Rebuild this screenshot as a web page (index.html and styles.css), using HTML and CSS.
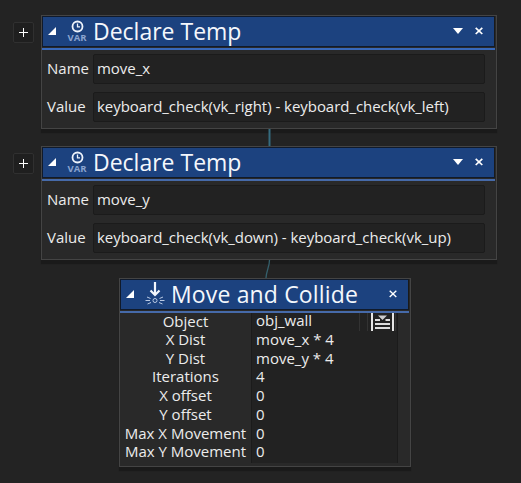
FILE: index.html
```html
<!DOCTYPE html>
<html lang="en">
<head>
  <meta charset="UTF-8" />
  <meta name="viewport" content="width=device-width, initial-scale=1.0"/>
  <title>Move and Collide</title>
  <link rel="stylesheet" href="styles.css">
</head>
<body>
  <main class="workspace">
    <div class="step">
      <button class="add-button" aria-label="Add">
        <svg width="9" height="9" viewBox="0 0 9 9"><path d="M0 4.5h9M4.5 0v9" stroke="#fff"/></svg>
      </button>
      <section class="node">
        <header class="node-header">
          <svg class="collapse" width="8" height="8" viewBox="0 0 8 8"><path d="M8 0v8H0z" fill="#fff"/></svg>
          <div class="node-icon">
            <svg width="13" height="13" viewBox="0 0 13 13" fill="none" stroke="#eef3fb"><circle cx="6.5" cy="6.5" r="5" stroke-width="1.8"/><path d="M6.5 3.5v3.3H9" stroke-width="1.3"/></svg>
            <span>VAR</span>
          </div>
          <h2>Declare Temp</h2>
          <div class="controls">
            <svg width="10" height="6" viewBox="0 0 10 6"><path d="M0 0h10L5 6z" fill="#fff"/></svg>
            <svg width="8" height="8" viewBox="0 0 8 8"><path d="M.7 .8l6.6 6.2M7.3 .8L.7 7" stroke="#fff" stroke-width="1.7"/></svg>
          </div>
        </header>
        <div class="fields">
          <label>Name</label><div class="field">move_x</div>
          <label>Value</label><div class="field">keyboard_check(vk_right) - keyboard_check(vk_left)</div>
        </div>
      </section>
    </div>

    <svg class="link" width="12" height="17" viewBox="0 0 12 17"><path d="M6.5 0v17" stroke="#356b7e" stroke-width="2"/></svg>

    <div class="step">
      <button class="add-button" aria-label="Add">
        <svg width="9" height="9" viewBox="0 0 9 9"><path d="M0 4.5h9M4.5 0v9" stroke="#fff"/></svg>
      </button>
      <section class="node soft">
        <header class="node-header">
          <svg class="collapse" width="8" height="8" viewBox="0 0 8 8"><path d="M8 0v8H0z" fill="#fff"/></svg>
          <div class="node-icon">
            <svg width="13" height="13" viewBox="0 0 13 13" fill="none" stroke="#eef3fb"><circle cx="6.5" cy="6.5" r="5" stroke-width="1.8"/><path d="M6.5 3.5v3.3H9" stroke-width="1.3"/></svg>
            <span>VAR</span>
          </div>
          <h2>Declare Temp</h2>
          <div class="controls">
            <svg width="10" height="6" viewBox="0 0 10 6"><path d="M0 0h10L5 6z" fill="#fff"/></svg>
            <svg width="8" height="8" viewBox="0 0 8 8"><path d="M.7 .8l6.6 6.2M7.3 .8L.7 7" stroke="#fff" stroke-width="1.7"/></svg>
          </div>
        </header>
        <div class="fields">
          <label>Name</label><div class="field">move_y</div>
          <label>Value</label><div class="field">keyboard_check(vk_down) - keyboard_check(vk_up)</div>
        </div>
      </section>
    </div>

    <svg class="link" width="12" height="18" viewBox="0 0 12 18"><path d="M6.5 0C6.5 7 3.5 10 3 18" fill="none" stroke="#35606c" stroke-width="1.3"/></svg>

    <section class="node soft collide">
      <header class="node-header">
        <svg class="collapse" width="8" height="8" viewBox="0 0 8 8"><path d="M8 0v8H0z" fill="#fff"/></svg>
        <svg class="move-icon" width="20" height="24" viewBox="0 0 20 24" fill="none">
          <path d="M10 0v13M5.5 8.5L10 13l4.500-4.500" stroke="#f2f6fc" stroke-width="2.2"/>
          <circle cx="10" cy="18.5" r="2" stroke="#b9c9e4"/>
          <path d="M.5 18.500H5M15 18.500h4.500M2 15l3.500 1.500M18 15l-3.500 1.500M2.500 22L6 20.500M17.500 22L14 20.500" stroke="#b9c9e4"/>
        </svg>
        <h2>Move and Collide</h2>
        <div class="controls">
          <svg width="8" height="8" viewBox="0 0 8 8"><path d="M.7 .8l6.6 6.2M7.3 .8L.7 7" stroke="#fff" stroke-width="1.4"/></svg>
        </div>
      </header>
      <div class="params">
        <div class="names">
          <div>Object</div>
          <div>X Dist</div>
          <div>Y Dist</div>
          <div>Iterations</div>
          <div>X offset</div>
          <div>Y offset</div>
          <div>Max X Movement</div>
          <div>Max Y Movement</div>
        </div>
        <div class="values">
          <div class="object-value">
            <span>obj_wall</span>
            <svg width="38" height="18" viewBox="0 0 38 18">
              <path d="M.5 0v18M8.5 0v18M36.5 0v18" stroke="#333"/>
              <path d="M13 0v18M34 0v18" stroke="#e4e4e4" stroke-width="2"/>
              <path d="M19 2.500h9L23.500 7z" fill="#ccc"/>
              <path d="M16 7h5M26.500 7H31M16 11h15M16 15h15" stroke="#ddd" stroke-width="2"/>
            </svg>
          </div>
          <div>move_x * 4</div>
          <div>move_y * 4</div>
          <div>4</div>
          <div>0</div>
          <div>0</div>
          <div>0</div>
          <div>0</div>
        </div>
      </div>
    </section>
  </main>
</body>
</html>
```
FILE: styles.css
```css
* {
  box-sizing: border-box;
}
body {
  margin: 0;
  background-color: #232323;
  color: #ececec;
  font-family: 'Open Sans', 'Noto Sans', sans-serif;
  font-size: 15px;
}
svg {
  display: block;
  flex: none;
}
.workspace {
  height: 483px;
  padding: 15px 0 0 13px;
  overflow: hidden;
}
.step {
  display: flex;
  gap: 7px;
}
.add-button {
  display: flex;
  align-items: center;
  justify-content: center;
  width: 21px;
  height: 21px;
  margin-top: 7px;
  padding: 0;
  background: #1f1f1f;
  border: 1px solid #303030;
  border-radius: 2px;
}
.node {
  width: 456px;
  height: 114px;
  background-color: #292929;
  border: 1px solid #444;
  box-shadow: 0 4px 1px #1a1a1a;
}
.node-header {
  display: flex;
  align-items: center;
  height: 31px;
  margin-right: 1px;
  padding-left: 5px;
  background-color: #1c427f;
  border: 1px solid #101a2b;
  border-right-color: #1a1a1a;
}
.collapse {
  margin-top: -1px;
}
.node-icon {
  display: flex;
  flex-direction: column;
  align-items: center;
  width: 20px;
  margin: -2px 0 0 11px;
}
.node-icon span {
  font-size: 9.5px;
  font-weight: bold;
  line-height: 9px;
  color: #8aa4d0;
}
h2 {
  margin: 0 0 0 6px;
  font-size: 23px;
  font-weight: normal;
  line-height: 29px;
  color: #f4f7fc;
  white-space: nowrap;
}
.controls {
  display: flex;
  align-items: center;
  gap: 12px;
  margin: -2px 11px 0 auto;
}
.fields {
  display: grid;
  grid-template-columns: 41px 392px;
  grid-auto-rows: 30px;
  gap: 8px 5px;
  margin: 1px 1px 0 0;
  padding: 4px 0 0 5px;
  border-top: 2px solid #3969ba;
}
.soft .fields {
  border-top-color: #466aa9;
}
label {
  line-height: 29px;
}
.field {
  padding-left: 3px;
  background-color: #222;
  border: 1px solid #1b1b1b;
  border-radius: 2px;
  line-height: 27px;
  letter-spacing: -0.04px;
  white-space: nowrap;
}
.link {
  margin-left: 250px;
}
.collide {
  width: 292px;
  height: 189px;
  margin-left: 106px;
}
.collide h2 {
  letter-spacing: 0.15px;
}
.move-icon {
  margin: -1px 0 0 11px;
}
.params {
  display: grid;
  grid-template-columns: 131px 147px;
  margin-top: 1px;
  margin-right: 1px;
  border-top: 2px solid #466aa9;
}
.names,
.values {
  height: 150px;
  line-height: 18.7px;
}
.names {
  text-align: center;
}
.names div:first-child {
  height: 17px;
  line-height: 16px;
}
.values {
  padding-left: 4px;
  background-color: #222;
  border: solid #1b1b1b;
  border-width: 0 1px;
}
.object-value {
  display: flex;
  justify-content: space-between;
  height: 17px;
  line-height: 15px;
}
```
